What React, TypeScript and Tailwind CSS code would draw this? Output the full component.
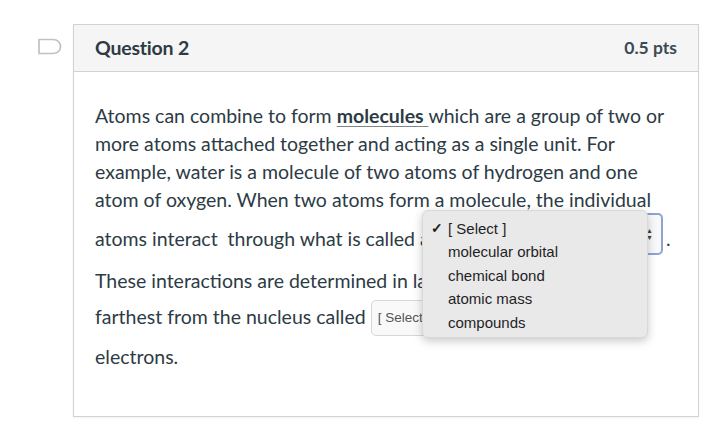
import React from "react";

function FlagIcon() {
  return (
    <svg width="26" height="17" viewBox="0 0 26 17" fill="none">
      <path d="M2 1.5 H16 C20.5 1.5 23.5 4.5 23.5 8.5 C23.5 12.5 20.5 15.5 16 15.5 H2 Z" stroke="#bcc2c7" strokeWidth="1.7" strokeLinejoin="round" />
    </svg>
  );
}

function FakeSelect({ className, label, focused }: { className: string; label: string; focused?: boolean }) {
  return (
    <span
      className={`inline-flex items-center justify-between rounded-[5px] bg-[#f9f9f9] ${
        focused ? "border-2 border-[#8fa4d6]" : "border border-[#d4d8db]"
      } ${className}`}
    >
      <span className="pl-[6px] text-[13.5px] text-[#555] font-['Liberation_Sans',sans-serif]">{label}</span>
      <span className="pr-[8px] flex flex-col items-center leading-none text-[7px] text-[#444]">
        <span>▲</span>
        <span>▼</span>
      </span>
    </span>
  );
}

export default function App() {
  const options = ["molecular orbital", "chemical bond", "atomic mass", "compounds"];

  return (
    <div className="w-[720px] h-[444px] bg-white relative font-['Lato',sans-serif] text-[#2d3b45]">
      <div className="flex pt-[24px]">
        <div className="w-[73px] flex justify-end pr-[10px] pt-[14px]">
          <FlagIcon />
        </div>
        <div className="w-[626px] border border-[#cfd3d6] shadow-[0_1px_2px_rgba(0,0,0,0.06)]">
          <div className="h-[47px] bg-[#f5f5f5] border-b border-[#cfd3d6] flex items-center justify-between pl-[21px] pr-[21px]">
            <span className="text-[19.5px] font-bold tracking-[-0.2px]">Question 2</span>
            <span className="text-[17.5px] font-bold text-[#3d4a53]">0.5 pts</span>
          </div>
          <div className="pl-[21px] pr-[18px] pt-[30px] pb-[38px] text-[19.5px]">
            <div className="h-[28px] flex items-center whitespace-nowrap">
              Atoms can combine to form&nbsp;
              <span className="font-bold underline decoration-[#7a858c] underline-offset-[3px]">molecules&nbsp;</span>
              which are a group of two or
            </div>
            <div className="h-[28px] flex items-center whitespace-nowrap">
              more atoms attached together and acting as a single unit. For
            </div>
            <div className="h-[28px] flex items-center whitespace-nowrap">
              example, water is a molecule of two atoms of hydrogen and one
            </div>
            <div className="h-[28px] flex items-center whitespace-nowrap">
              atom of oxygen. When two atoms form a molecule, the individual
            </div>
            <div className="h-[50px] w-[574px] flex items-center whitespace-nowrap">
              <span>atoms interact&nbsp; through what is called a&nbsp;</span>
              <FakeSelect className="flex-1 h-[42px] mb-[10px]" label="[ Select ]" focused />
              <span className="w-[6px] pl-[3px]">.</span>
            </div>
            <div className="h-[34px] flex items-center whitespace-nowrap">
              These interactions are determined in large part by the electrons
            </div>
            <div className="h-[38px] flex items-center whitespace-nowrap">
              <span>farthest from the nucleus called&nbsp;</span>
              <FakeSelect className="w-[200px] h-[36px] mt-[2px]" label="[ Select ]" />
            </div>
            <div className="h-[42px] flex items-center whitespace-nowrap">electrons.</div>
          </div>
        </div>
      </div>

      <div className="absolute left-[422px] top-[210px] w-[226px] h-[128px] rounded-[6px] bg-[#e9e9ea] shadow-[0_3px_10px_rgba(0,0,0,0.22)] border border-[#d9d9d9] pt-[6px] font-['Liberation_Sans',sans-serif] text-[15px] text-[#1f1f1f]">
        <div className="h-[23.5px] flex items-center">
          <span className="w-[25px] text-right pr-[5px] text-[14px] font-bold">✓</span>
          <span>[ Select ]</span>
        </div>
        {options.map((o) => (
          <div key={o} className="h-[23.5px] flex items-center pl-[25px]">
            {o}
          </div>
        ))}
      </div>
    </div>
  );
}
